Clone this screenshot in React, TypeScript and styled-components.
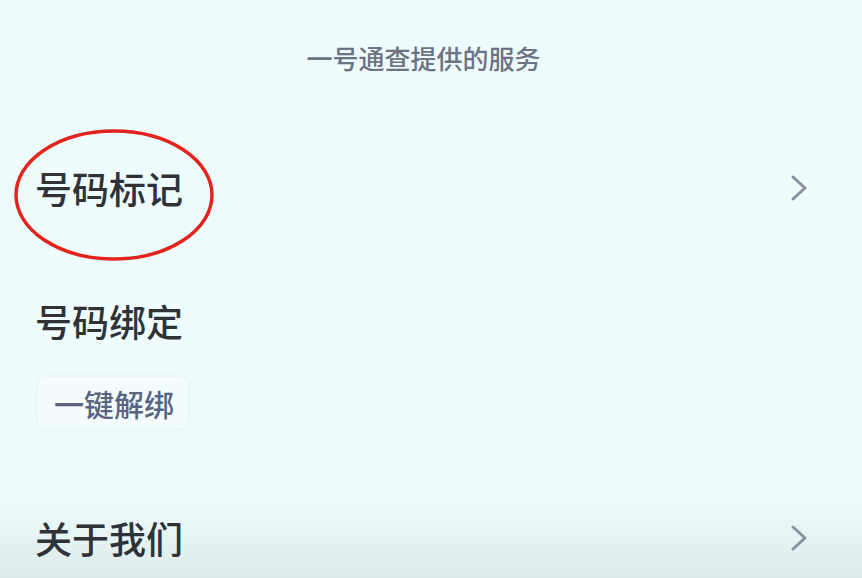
import styled, { createGlobalStyle } from "styled-components";

const GlobalStyle = createGlobalStyle`
	html, body {
		margin: 0;
		padding: 0;
	}
	body {
		font-family: "Noto Sans CJK SC", "Noto Sans", sans-serif;
	}
`;

const Page = styled.div`
	position: relative;
	width: 862px;
	height: 578px;
	overflow: hidden;
	background: linear-gradient(180deg, #effcfd 0%, #effcfd 86%, #dcebea 100%);
	display: flex;
	flex-direction: column;
`;

const Header = styled.div`
	height: 116px;
	display: flex;
	align-items: center;
	justify-content: center;
	padding-right: 15px;
	font-size: 26px;
	font-weight: 500;
	color: #6c7383;
`;

const Row = styled.div<{ $height: number }>`
	height: ${(p) => p.$height}px;
	display: flex;
	align-items: center;
	justify-content: space-between;
	padding: 0 54px 0 35px;
`;

const Title = styled.div`
	font-size: 37px;
	font-weight: 500;
	line-height: 40px;
	color: #2f3338;
`;

const Section = styled.div`
	padding: 40px 0 0 35px;
	display: flex;
	flex-direction: column;
	align-items: flex-start;
	gap: 36px;
`;

const Pill = styled.div`
	height: 52px;
	padding: 0 14px 0 16px;
	display: flex;
	align-items: center;
	border-radius: 10px;
	background: rgba(255, 255, 255, 0.25);
	box-shadow: 0 0 5px rgba(200, 212, 222, 0.3);
	font-size: 30px;
	font-weight: 500;
	color: #5a6480;
	margin-left: 3px;
`;

const Spacer = styled.div`
	height: 70px;
`;

const Ring = styled.svg`
	position: absolute;
	left: 13px;
	top: 128px;
	pointer-events: none;
`;

function Chevron() {
	return (
		<svg width="18" height="26" viewBox="0 0 18 26">
			<polyline
				points="3,2 15,13 3,24"
				fill="none"
				stroke="#8b919e"
				strokeWidth="3"
				strokeLinecap="round"
				strokeLinejoin="round"
			/>
		</svg>
	);
}

function App() {
	return (
		<Page>
			<GlobalStyle />
			<Header>一号通查提供的服务</Header>
			<Row $height={146}>
				<Title>号码标记</Title>
				<Chevron />
			</Row>
			<Section>
				<Title>号码绑定</Title>
				<Pill>一键解绑</Pill>
			</Section>
			<Spacer />
			<Row $height={80}>
				<Title>关于我们</Title>
				<Chevron />
			</Row>
			<Ring width="202" height="134" viewBox="0 0 202 134">
				<ellipse cx="101" cy="67" rx="98" ry="64" fill="none" stroke="#e3231c" strokeWidth="3.5" />
			</Ring>
		</Page>
	);
}

export default App;
